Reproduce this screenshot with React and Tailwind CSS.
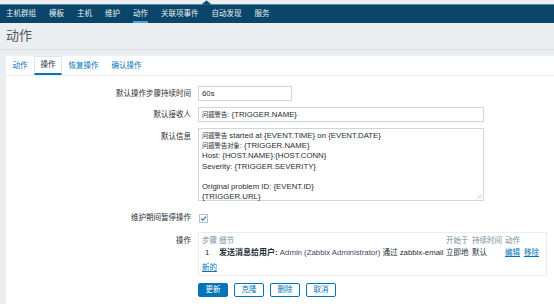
import React from 'react';

const FONT = { fontFamily: '"Liberation Sans", "Noto Sans CJK SC", sans-serif' };

const navItems = ['主机群组', '模板', '主机', '维护', '动作', '关联项事件', '自动发现', '服务'];

// [cjk part, latin part] per line of the default message
const messageLines = [
  ['问题警告', ' started at {EVENT.TIME} on {EVENT.DATE}'],
  ['问题警告对象', ': {TRIGGER.NAME}'],
  ['', 'Host: {HOST.NAME}:{HOST.CONN}'],
  ['', 'Severity: {TRIGGER.SEVERITY}'],
  ['', ''],
  ['', 'Original problem ID: {EVENT.ID}'],
  ['', '{TRIGGER.URL}'],
];

function Label({ children, className = '' }) {
  return (
    <div className={`w-[185px] shrink-0 text-right text-[7.5px] text-[#1f2c33] ${className}`}>{children}</div>
  );
}

export default function App() {
  return (
    <div className="w-[554px] h-[304px] overflow-hidden bg-[#ebeef0] relative" style={FONT}>
      {/* top strip */}
      <div className="h-[4px] bg-[#edf0f2]" />

      {/* main nav */}
      <nav className="h-[19px] bg-[#0a466a] border-t border-[#5f8aa3] flex items-stretch pl-[6px] gap-[13px] relative">
        {navItems.map((item) => (
          <span
            key={item}
            className={`flex items-center text-[7.5px] text-[#e6edf1] ${
              item === '动作' ? 'shadow-[inset_0_-2px_0_#4fa3d8]' : ''
            }`}
          >
            {item}
          </span>
        ))}
      </nav>
      <svg className="absolute left-[201px] top-0" width="11" height="5" viewBox="0 0 11 5">
        <polygon points="0,5 5.5,0.5 11,5" fill="#0a466a" stroke="#5f8aa3" strokeWidth="0.8" />
      </svg>

      {/* page header */}
      <div className="h-[26px] flex items-center pl-[6px] text-[13px] text-[#555]">动作</div>
      <div className="h-px bg-[#dde2e5]" />
      <div className="h-[6px]" />

      {/* content panel */}
      <div className="ml-[6px] bg-white h-[248px]">
        {/* tabs */}
        <div className="h-[20px] flex items-stretch border-b border-[#ebeef0] text-[7.5px]">
          <span className="flex items-center px-[5.5px] border border-transparent text-[#0275b8]">动作</span>
          <span className="flex items-center px-[5.5px] border-x border-t border-[#dfe4e7] border-b-2 border-b-[#0275b8] text-[#1f2c33]">
            操作
          </span>
          <span className="flex items-center px-[5.5px] border border-transparent text-[#0275b8]">恢复操作</span>
          <span className="flex items-center px-[5.5px] border border-transparent text-[#0275b8]">确认操作</span>
        </div>

        {/* form */}
        <div className="flex items-center mt-[10px]">
          <Label>默认操作步骤持续时间</Label>
          <div className="ml-[7px] w-[94px] h-[15px] border border-[#cfd6da] flex items-center pl-[3px] text-[7.8px] text-[#1f2c33]">
            60s
          </div>
        </div>

        <div className="flex items-center mt-[6px]">
          <Label>默认接收人</Label>
          <div className="ml-[7px] w-[286px] h-[15px] border border-[#cfd6da] flex items-center pl-[3px] text-[7.8px] text-[#1f2c33] whitespace-pre">
            <span className="text-[6.3px]">问题警告</span>: {'{TRIGGER.NAME}'}
          </div>
        </div>

        <div className="flex items-start mt-[6px]">
          <Label className="pt-[3px]">默认信息</Label>
          <div className="relative ml-[7px] w-[286px] h-[73px] border border-[#cfd6da] px-[3px] pt-[2px] text-[7.8px] leading-[10.2px] text-[#1f2c33]">
            {messageLines.map(([cjk, latin], i) => (
              <div key={i} className="h-[10.2px] whitespace-pre">
                {cjk && <span className="text-[6.3px]">{cjk}</span>}
                {latin}
              </div>
            ))}
            <svg className="absolute right-[1px] bottom-[1px]" width="6" height="6" viewBox="0 0 6 6">
              <path d="M5.5 1.5 L1.5 5.5 M5.5 3.8 L3.8 5.5" stroke="#9aa5ab" strokeWidth="0.6" />
            </svg>
          </div>
        </div>

        <div className="flex items-center mt-[10px] h-[14px]">
          <Label>维护期间暂停操作</Label>
          <div className="ml-[8px] w-[9px] h-[9px] border border-[#b8c2c8] flex items-center justify-center">
            <svg width="7" height="7" viewBox="0 0 7 7">
              <path d="M1 3.6 L2.8 5.3 L6 1.6" fill="none" stroke="#0275b8" strokeWidth="1.1" />
            </svg>
          </div>
        </div>

        <div className="flex items-start mt-[7px]">
          <Label className="pt-[3px]">操作</Label>
          <div className="ml-[7px] w-[349px] border border-[#ebeef0] pl-[3px] pt-[2px] pb-[1px] text-[7.8px]">
            <div className="flex items-center h-[12px] text-[7.5px] text-[#768d99]">
              <span className="w-[17px]">步骤</span>
              <span className="flex-1">细节</span>
              <span className="w-[26px]">开始于</span>
              <span className="w-[33px]">持续时间</span>
              <span className="w-[41px]">动作</span>
            </div>
            <div className="flex items-center h-[12px] text-[#1f2c33]">
              <span className="w-[17px] pl-[3px]">1</span>
              <span className="flex-1 whitespace-nowrap">
                <b className="text-[8px]">发送消息给用户:</b>{' '}
                <span className="text-[#4a3f6b]">Admin (Zabbix Administrator)</span>{' '}
                <span className="text-[7.5px]">通过</span> zabbix-email
              </span>
              <span className="w-[26px] text-[7.5px]">立即地</span>
              <span className="w-[33px] text-[7.5px]">默认</span>
              <span className="w-[41px] text-[7.5px] text-[#0275b8] flex gap-[4px]">
                <span className="underline">编辑</span>
                <span className="underline">移除</span>
              </span>
            </div>
            <div className="flex items-center h-[12px] mt-[3px] text-[7.5px] text-[#0275b8]">
              <span className="underline">新的</span>
            </div>
          </div>
        </div>

        {/* buttons */}
        <div className="flex mt-[7px] pl-[192px] gap-[6px] text-[7.5px]">
          <button className="w-[30px] h-[14px] rounded-[2px] bg-[#0275b8] border border-[#0275b8] text-white">更新</button>
          <button className="w-[30px] h-[14px] rounded-[2px] bg-white border border-[#0275b8] text-[#0275b8]">克隆</button>
          <button className="w-[30px] h-[14px] rounded-[2px] bg-white border border-[#0275b8] text-[#0275b8]">删除</button>
          <button className="w-[30px] h-[14px] rounded-[2px] bg-white border border-[#0275b8] text-[#0275b8]">取消</button>
        </div>
      </div>
    </div>
  );
}
